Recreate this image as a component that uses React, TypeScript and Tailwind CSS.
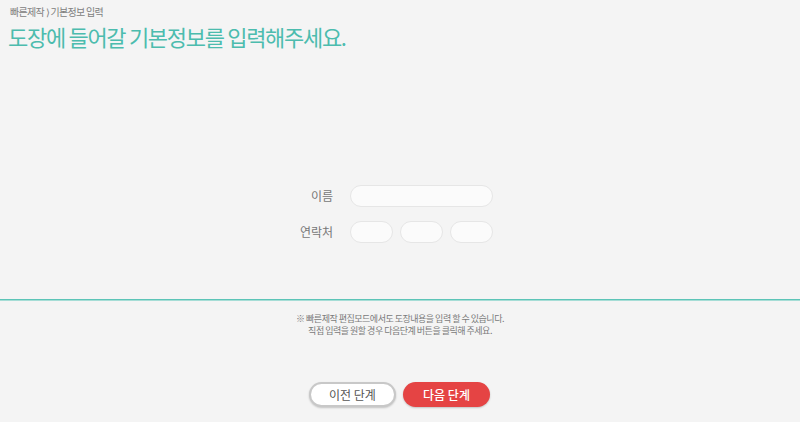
import React from "react";

const FONT = { fontFamily: '"Noto Sans CJK KR", "Noto Sans", sans-serif' };

export default function App() {
  return (
    <div className="w-[800px] h-[422px] bg-[#f4f4f4] flex flex-col" style={FONT}>
      <div className="px-[10px] pt-[4px] text-[10px] leading-[16px] text-[#808080] tracking-[-0.7px]">
        빠른제작 ⟩ 기본정보 입력
      </div>
      <h1 className="pl-[8px] mt-[1px] text-[22px] leading-[30px] font-normal text-[#4cbcae] tracking-[-1.3px]">
        도장에 들어갈 기본정보를 입력해주세요.
      </h1>

      <div className="flex flex-col items-center mt-[134px] gap-[14px] pr-[14px]">
        <div className="flex items-center gap-[17px]">
          <span className="w-[40px] text-right text-[12px] leading-[22px] text-[#777]">이름</span>
          <input className="w-[143px] h-[22px] rounded-full bg-[#fbfbfb] border border-[#e6e6e6] outline-none" />
        </div>
        <div className="flex items-center gap-[17px]">
          <span className="w-[40px] text-right text-[12px] leading-[22px] text-[#777]">연락처</span>
          <div className="flex gap-[7px]">
            <input className="w-[43px] h-[22px] rounded-full bg-[#fbfbfb] border border-[#e6e6e6] outline-none" />
            <input className="w-[43px] h-[22px] rounded-full bg-[#fbfbfb] border border-[#e6e6e6] outline-none" />
            <input className="w-[43px] h-[22px] rounded-full bg-[#fbfbfb] border border-[#e6e6e6] outline-none" />
          </div>
        </div>
      </div>

      <div className="mt-[56px] h-[2px] bg-[#a6ddd6] border-t border-[#5cc4b7]" />

      <div className="mt-[12px] text-center text-[9px] leading-[12px] text-[#7a7a7a] tracking-[-0.5px]">
        <p>※ 빠른제작 편집모드에서도 도장내용을 입력 할 수 있습니다.</p>
        <p>직접 입력을 원할 경우 다음단계 버튼을 클릭해 주세요.</p>
      </div>

      <div className="mt-[45px] flex justify-center gap-[7px] pr-[1px]">
        <button className="w-[87px] h-[25px] rounded-full bg-white border-2 border-[#c8c8c8] text-[12px] text-[#555] shadow-[0_1px_2px_rgba(0,0,0,0.2)]">
          이전 단계
        </button>
        <button className="w-[87px] h-[25px] rounded-full bg-[#e54444] text-[12px] font-medium text-white shadow-[0_1px_2px_rgba(0,0,0,0.2)]">
          다음 단계
        </button>
      </div>
    </div>
  );
}
